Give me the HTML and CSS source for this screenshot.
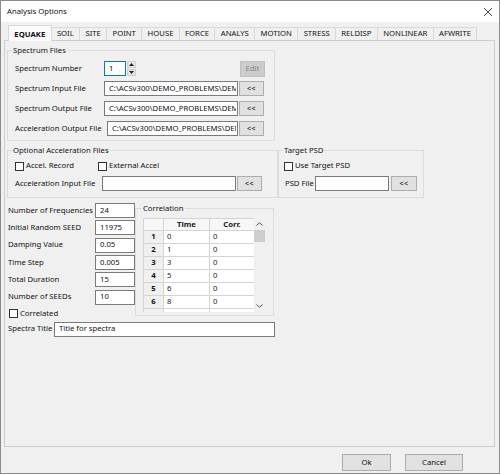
FILE: index.html
```html
<!DOCTYPE html>
<html>
<head>
<meta charset="utf-8">
<title>Analysis Options</title>
<link rel="stylesheet" href="styles.css">
</head>
<body>
<div class="window">
  <div class="titlebar">
    <span class="title">Analysis Options</span>
    <svg class="close" width="10" height="10" viewBox="0 0 10 10"><path d="M1 1L9 9M9 1L1 9" stroke="#333" stroke-width="0.9" fill="none"/></svg>
  </div>
  <div class="tabs">
    <div class="tab active">EQUAKE</div>
    <div class="tab">SOIL</div>
    <div class="tab">SITE</div>
    <div class="tab">POINT</div>
    <div class="tab">HOUSE</div>
    <div class="tab">FORCE</div>
    <div class="tab">ANALYS</div>
    <div class="tab">MOTION</div>
    <div class="tab">STRESS</div>
    <div class="tab">RELDISP</div>
    <div class="tab">NONLINEAR</div>
    <div class="tab">AFWRITE</div>
  </div>
  <div class="panel">
    <fieldset class="group spectrum">
      <legend>Spectrum Files</legend>
      <div class="gbody spectrum-body">
        <div class="row">
          <span class="lbl w89">Spectrum Number</span>
          <div class="input spin-input">1</div>
          <div class="spin-btns">
            <div class="sb"><svg width="5" height="3" viewBox="0 0 5 3"><path d="M0 3L2.5 0L5 3Z" fill="#222"/></svg></div>
            <div class="sb"><svg width="5" height="3" viewBox="0 0 5 3"><path d="M0 0L2.5 3L5 0Z" fill="#222"/></svg></div>
          </div>
          <div class="btn edit">Edit</div>
        </div>
        <div class="row">
          <span class="lbl w89">Spectrum Input File</span>
          <div class="input path"><span class="clip">C:\ACSv300\DEMO_PROBLEMS\DEM</span></div>
          <div class="btn browse">&lt;&lt;</div>
        </div>
        <div class="row">
          <span class="lbl w89">Spectrum Output File</span>
          <div class="input path"><span class="clip">C:\ACSv300\DEMO_PROBLEMS\DEM</span></div>
          <div class="btn browse">&lt;&lt;</div>
        </div>
        <div class="row">
          <span class="lbl w92">Acceleration Output File</span>
          <div class="input path short"><span class="clip">C:\ACSv300\DEMO_PROBLEMS\DEM</span></div>
          <div class="btn browse">&lt;&lt;</div>
        </div>
      </div>
    </fieldset>

    <div class="optrow">
      <fieldset class="group optional">
        <legend>Optional Acceleration Files</legend>
        <div class="gbody optional-body">
          <div class="chkrow">
            <span class="chk"><span class="box"></span>Accel. Record</span>
            <span class="chk ext"><span class="box"></span>External Accel</span>
          </div>
          <div class="row">
            <span class="lbl w87">Acceleration Input File</span>
            <div class="input path"></div>
            <div class="btn browse">&lt;&lt;</div>
          </div>
        </div>
      </fieldset>
      <fieldset class="group target">
        <legend>Target PSD</legend>
        <div class="gbody target-body">
          <div class="chkrow">
            <span class="chk"><span class="box"></span>Use Target PSD</span>
          </div>
          <div class="row psd">
            <span class="lbl w30">PSD File</span>
            <div class="input psdin"></div>
            <div class="btn browse wide">&lt;&lt;</div>
          </div>
        </div>
      </fieldset>
    </div>

    <div class="lower">
      <div class="params">
        <div class="pgrid">
          <span>Number of Frequencies</span><div class="input num">24</div>
          <span>Initial Random SEED</span><div class="input num">11975</div>
          <span>Damping Value</span><div class="input num">0.05</div>
          <span>Time Step</span><div class="input num">0.005</div>
          <span>Total Duration</span><div class="input num">15</div>
          <span>Number of SEEDs</span><div class="input num">10</div>
        </div>
        <div class="chkrow corr-chk">
          <span class="chk"><span class="box"></span>Correlated</span>
        </div>
      </div>
      <fieldset class="group correlation">
        <legend>Correlation</legend>
        <div class="gbody corr-body">
          <div class="gridwrap">
            <div class="gridview">
              <table>
                <colgroup><col class="c0"><col class="c1"><col class="c2"></colgroup>
                <thead>
                  <tr><th></th><th>Time</th><th>Corr.</th></tr>
                </thead>
                <tbody>
                  <tr><th>1</th><td>0</td><td>0</td></tr>
                  <tr><th>2</th><td>1</td><td>0</td></tr>
                  <tr><th>3</th><td>3</td><td>0</td></tr>
                  <tr><th>4</th><td>5</td><td>0</td></tr>
                  <tr><th>5</th><td>6</td><td>0</td></tr>
                  <tr><th>6</th><td>8</td><td>0</td></tr>
                  <tr><th>7</th><td>9</td><td>0</td></tr>
                </tbody>
              </table>
            </div>
            <div class="vscroll">
              <div class="arrow"><svg width="7" height="4" viewBox="0 0 7 4"><path d="M0.5 3.5L3.5 0.7L6.5 3.5" stroke="#555" stroke-width="1" fill="none"/></svg></div>
              <div class="thumb"></div>
              <div class="track"></div>
              <div class="arrow"><svg width="7" height="4" viewBox="0 0 7 4"><path d="M0.5 0.5L3.5 3.3L6.5 0.5" stroke="#555" stroke-width="1" fill="none"/></svg></div>
            </div>
          </div>
        </div>
      </fieldset>
    </div>

    <div class="row spectra">
      <span class="lbl w46">Spectra Title</span>
      <div class="input title-in">Title for spectra</div>
    </div>
  </div>
  <div class="footer">
    <div class="btn ok">Ok</div>
    <div class="btn cancel">Cancel</div>
  </div>
</div>
</body>
</html>
```

FILE: styles.css
```css
* { box-sizing: border-box; }
html, body { margin: 0; padding: 0; background: #f0f0f0; }
body {
  font-family: "Noto Sans", "Open Sans", sans-serif;
  font-size: 7.7px;
  color: #111;
  line-height: 1;
}
.window {
  width: 500px;
  height: 474px;
  border: 1px solid #8a8a8a;
  background: #f0f0f0;
  display: flex;
  flex-direction: column;
}
.titlebar {
  height: 21px;
  flex: none;
  background: #fff;
  display: flex;
  align-items: center;
  justify-content: space-between;
  padding: 0 6px 0 6px;
}
.title { font-size: 7.7px; color: #111; }
.close { display: block; }

.tabs {
  height: 18px;
  flex: none;
  display: flex;
  align-items: flex-end;
  padding-left: 7px;
  position: relative;
  z-index: 1;
}
.tab {
  height: 13px;
  padding: 0 5.35px;
  border: 1px solid #d9d9d9;
  border-bottom: none;
  margin-right: -1px;
  background: #f0f0f0;
  display: flex;
  align-items: center;
  color: #111;
}
.tab.active {
  height: 16px;
  margin-bottom: -1px;
  background: #fbfbfb;
  font-weight: bold;
  padding-top: 2px;
}

.panel {
  flex: none;
  margin-left: 3px;
  width: 491px;
  height: 407px;
  border: 1px solid #cdcdcd;
  padding: 3px 0 0 2px;
}

fieldset.group {
  margin: 0;
  padding: 0;
  border: 1px solid #dcdcdc;
  min-width: 0;
}
fieldset.group legend {
  padding: 0 1px;
  margin-left: 4px;
  line-height: 12px;
  height: 12px;
}
fieldset.correlation legend { margin-left: 6px; }

.row {
  display: flex;
  align-items: center;
  height: 15px;
}
.lbl { flex: none; white-space: nowrap; }
.w89 { width: 89px; }
.w92 { width: 92px; }
.w87 { width: 87px; }
.w30 { width: 30px; }
.w46 { width: 46px; }

.input {
  flex: none;
  height: 15px;
  border: 1px solid #7a7a7a;
  background: #fff;
  padding: 0 3px 0 4px;
  display: flex;
  align-items: center;
  overflow: hidden;
  white-space: nowrap;
}
.clip { display: block; overflow: hidden; white-space: nowrap; }
.btn {
  flex: none;
  height: 15px;
  border: 1px solid #adadad;
  background: #e1e1e1;
  display: flex;
  align-items: center;
  justify-content: center;
  color: #111;
}

/* Spectrum Files */
.spectrum { width: 268px; }
.spectrum-body { padding: 5px 9px 4px 7px; }
.spectrum-body .row + .row { margin-top: 5px; }
.spin-input {
  width: 22px;
  border: 1px solid #0078d7;
}
.spin-btns {
  margin-left: 1px;
  display: flex;
  flex-direction: column;
  gap: 1px;
}
.sb {
  width: 9px;
  height: 7px;
  background: #e6e6e6;
  border: 1px solid #cfcfcf;
  display: flex;
  align-items: center;
  justify-content: center;
}
.sb svg { display: block; }
.edit {
  margin-left: auto;
  width: 25px;
  height: 16px;
  background: #cccccc;
  border-color: #bfbfbf;
  color: #858585;
}
.path { width: 134px; padding-right: 1px; }
.path.short { width: 131px; }
.browse {
  margin-left: 1px;
  width: 25px;
  letter-spacing: 0.5px;
  font-size: 7px;
}
.browse.wide { width: 26px; margin-left: 2px; }

/* Optional row */
.optrow {
  display: flex;
  margin-top: 3px;
}
.optional { width: 271px; }
.optional-body { padding: 4px 7px 6px 7px; }
.target { width: 146px; }
.target-body { padding: 4px 6px 6px 5px; }
.chkrow {
  display: flex;
  align-items: center;
  height: 12px;
  margin-bottom: 4px;
}
.chk {
  display: inline-flex;
  align-items: center;
  white-space: nowrap;
}
.box {
  width: 9px;
  height: 9px;
  border: 1px solid #333;
  background: #fff;
  margin-right: 2px;
  flex: none;
}
.chk.ext { margin-left: 24px; }
.psd { padding-left: 1px; }
.psdin { width: 74px; }

/* Lower */
.lower {
  display: flex;
  align-items: flex-start;
  margin-top: 4px;
}
.params {
  margin-left: 1px;
  padding-top: 1px;
  width: 127px;
}
.pgrid {
  display: grid;
  grid-template-columns: 87px 40px;
  grid-auto-rows: 15px;
  row-gap: 2.33px;
  align-items: center;
}
.pgrid span { white-space: nowrap; }
.num { width: 40px; padding-left: 4px; }
.corr-chk { margin: 3px 0 0 1px; }

.correlation {
  margin-left: 3px;
  width: 139px;
}
.corr-body { padding: 4px 8px 3px 7px; }
.gridwrap {
  display: flex;
  width: 122px;
  height: 94px;
}
.gridview {
  width: 111px;
  height: 94px;
  overflow: hidden;
  background: #fff;
}
table {
  border-collapse: collapse;
  table-layout: fixed;
  width: 111px;
}
col.c0 { width: 20px; }
col.c1 { width: 46px; }
col.c2 { width: 45px; }
th, td {
  border: 1px solid #d4d4d4;
  padding: 0 0 0 3px;
  text-align: left;
  font-weight: normal;
  color: #222;
  white-space: nowrap;
  overflow: hidden;
}
thead tr { height: 12px; }
tbody tr { height: 13px; }
thead th {
  text-align: center;
  font-weight: bold;
  background: #f7f7f7;
  padding: 0;
}
tbody th {
  text-align: center;
  font-weight: bold;
  background: #f0f0f0;
  padding: 0;
  color: #111;
}
.vscroll {
  width: 11px;
  height: 94px;
  background: #f0f0f0;
  display: flex;
  flex-direction: column;
}
.vscroll .arrow {
  height: 12px;
  display: flex;
  align-items: center;
  justify-content: center;
  flex: none;
}
.vscroll .arrow svg { display: block; }
.thumb {
  height: 12px;
  background: #cdcdcd;
  flex: none;
}
.track { flex: 1; }

.spectra {
  margin: 2px 0 0 1px;
}
.title-in { width: 221px; }

.footer {
  flex: none;
  display: flex;
  justify-content: flex-end;
  gap: 14px;
  margin-top: 7px;
  padding-right: 36px;
}
.ok { width: 49px; height: 17px; }
.cancel { width: 58px; height: 17px; }
```
